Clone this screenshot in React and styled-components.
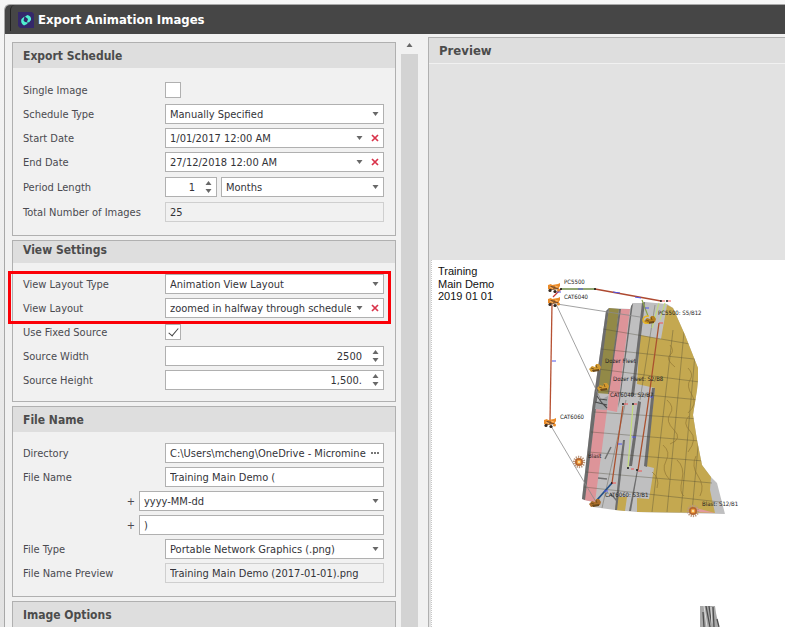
import React from 'react'
import styled, { createGlobalStyle } from 'styled-components'

const GlobalStyle = createGlobalStyle`
  * { box-sizing: border-box; }
  body {
    margin: 0;
    overflow: hidden;
    background: linear-gradient(#f6f6f6, #e2e2e2);
    color: #4a4a50;
    font-family: 'DejaVu Sans Condensed', Tahoma, sans-serif;
    font-size: 11px;
  }
  input, select, button { font: inherit; color: inherit; margin: 0; }
`

const Window = styled.div`
  display: flex;
  flex-direction: column;
  height: calc(100vh - 4px);
  margin: 4px 0 0 4px;
  overflow: hidden;
  background: #f1f1f1;
  border: solid #a8a8a8;
  border-width: 1px 0 0 1px;
  border-top-left-radius: 6px;
`

const TitleBar = styled.header`
  flex-shrink: 0;
  height: 29px;
  padding: 0 0 3px 5px;
  background: #464646;
  color: #fff;
`

const TitleInner = styled.div`
  display: flex;
  align-items: center;
  gap: 4px;
  height: 26px;
  padding: 4px 7px 0;
  border-left: 1px solid #222;
  border-top-left-radius: 5px;
`

const Title = styled.h1`
  margin: 0;
  font-size: 13px;
  font-weight: bold;
  line-height: 16px;
`

const Content = styled.main`
  display: flex;
  flex: 1;
  min-height: 0;
`

const Settings = styled.form`
  display: flex;
  flex: 0 0 391px;
  flex-direction: column;
  gap: 4px;
  padding: 8px 0 0 7px;
  overflow: hidden;
`

const Panel = styled.section`
  flex-shrink: 0;
  border: 1px solid #b0b0b0;
`

const PanelTitle = styled.h2`
  display: flex;
  flex-shrink: 0;
  align-items: center;
  height: ${p => (p.$short ? 22 : 25)}px;
  margin: 0;
  padding: ${p => (p.$short ? '0 10px 4px' : '0 10px')};
  background: #dedede;
  color: #4c4c4c;
  font-size: ${p => (p.$large ? 13 : 12)}px;
  line-height: 16px;
`

const PanelBody = styled.div`
  display: flex;
  flex-direction: column;
  gap: 4px;
  padding: ${p => p.$top || 11}px 11px ${p => p.$bottom || 11}px 10px;
`

const Row = styled.div`
  display: flex;
  align-items: center;
  gap: 4px;
  min-height: ${p => (p.$tall ? 22 : 20)}px;
`

const Label = styled.label`
  flex: 0 0 138px;
`

const Plus = styled.label`
  flex: 0 0 112px;
  text-align: right;
`

const Field = styled.div`
  display: flex;
  flex: ${p => (p.$small ? '0 0 52px' : '1')};
  align-items: center;
  min-width: 0;
  height: 20px;
  background: ${p => (p.$readOnly ? '#f1f1f1' : '#fff')};
  border: 1px solid ${p => (p.$readOnly ? '#cfcfcf' : '#b0b0b0')};
  color: #333338;
`

const TextInput = styled.input`
  flex: 1;
  width: 100%;
  min-width: 0;
  height: 18px;
  padding: ${p => (p.$right ? '0 5px 0 4px' : '0 0 0 4px')};
  background: transparent;
  border: 0;
  outline: 0;
  text-align: ${p => (p.$right ? 'right' : 'left')};
`

const Select = styled.select`
  flex: 1;
  min-width: 0;
  height: 18px;
  padding: 0 0 0 4px;
  appearance: none;
  background: transparent;
  border: 0;
  outline: 0;
`

const IconButton = styled.button`
  display: flex;
  flex: none;
  align-items: center;
  justify-content: center;
  width: 16px;
  height: ${p => (p.$half ? 8 : 18)}px;
  padding: 0;
  background: none;
  border: 0;
`

const Spinner = styled.div`
  display: flex;
  flex: none;
  flex-direction: column;
`

const Check = styled.input`
  display: grid;
  place-content: center;
  width: 16px;
  height: 16px;
  margin: 0;
  appearance: none;
  background: #fff;
  border: 1px solid #b0b0b0;
  &:checked::before {
    content: '';
    width: 4px;
    height: 9px;
    margin-bottom: 2px;
    border: solid #444;
    border-width: 0 1px 1px 0;
    transform: rotate(40deg);
  }
`

const Highlight = styled.div`
  display: flex;
  flex-direction: column;
  gap: 4px;
  position: relative;
  &::after {
    content: '';
    position: absolute;
    inset: -3px -7px -6px -15px;
    border: 3px solid #fb0007;
    pointer-events: none;
  }
`

const ScrollBar = styled.div`
  display: flex;
  flex: 0 0 17px;
  flex-direction: column;
  margin: 2px 10px 0 5px;
`

const Thumb = styled.div`
  flex: 1;
  background: #d3d3d3;
`

const PreviewPanel = styled.section`
  display: flex;
  flex: 1;
  flex-direction: column;
  min-width: 0;
  margin-top: 3px;
  border: solid #b0b0b0;
  border-width: 1px 0 0 1px;
`

const PreviewArea = styled.div`
  flex: 1;
  min-height: 0;
  padding: 196px 0 0 2px;
  background: #e2e2e2;
  border-top: 1px solid #f1f1f1;
`

const Sheet = styled.div`
  display: flex;
  height: 100%;
  overflow: hidden;
  background: #fff;
  border-left: 1px dotted #c8c8c8;
  svg { flex-shrink: 0; }
`

const Caret = ({ up }) => (
  <svg width="7" height="4" viewBox="0 0 7 4">
    <path d={up ? 'M0.5 4h6L3.5 0z' : 'M0.5 0h6L3.5 4z'} fill="#686868" />
  </svg>
)

const Cross = () => (
  <svg width="8" height="8" viewBox="0 0 8 8">
    <path d="M1 1l6 6M7 1L1 7" stroke="#d9334b" strokeWidth="1.7" />
  </svg>
)

const Logo = () => (
  <svg width="16" height="16" viewBox="0 0 16 16">
    <path d="M0 0h14l2 2v14H2l-2-2z" fill="#34286a" />
    <path d="M7 4.500L9.500 3C12 3.500 13.500 5.500 13 8l-2 2.500L9 10l1-3z" fill="#50f0d0" />
    <path d="M6.500 4.500L3.500 7C2.500 9.500 3.500 12 6 13.500l3-1.500 1-1.500-3-.5-1.500-1.500z" fill="#50f0d0" />
  </svg>
)

const SelectField = ({ id, value, label, clearable }) => (
  <Field>
    <Select id={id} defaultValue={value} aria-label={label}>
      <option>{value}</option>
    </Select>
    <IconButton as="span"><Caret /></IconButton>
    {clearable && <IconButton type="button" aria-label="Clear"><Cross /></IconButton>}
  </Field>
)

const DateField = ({ id, value }) => (
  <Field>
    <TextInput id={id} defaultValue={value} />
    <IconButton type="button" aria-label="Open calendar"><Caret /></IconButton>
    <IconButton type="button" aria-label="Clear"><Cross /></IconButton>
  </Field>
)

const NumberField = ({ id, value, small }) => (
  <Field $small={small}>
    <TextInput id={id} defaultValue={value} $right />
    <Spinner>
      <IconButton type="button" aria-label="Increase" $half><Caret up /></IconButton>
      <IconButton type="button" aria-label="Decrease" $half><Caret /></IconButton>
    </Spinner>
  </Field>
)

const TextField = ({ id, value, readOnly, children }) => (
  <Field $readOnly={readOnly}>
    <TextInput id={id} defaultValue={value} readOnly={readOnly} />
    {children}
  </Field>
)

const Truck = ({ x, y, color = '#e98a28' }) => (
  <g transform={`translate(${x} ${y})`}>
    <path d="M-6-3l3-1 1 1 6-1 2-1v3l-2 3-8 1-2-1z" fill={color} />
    <path d="M-3-2l5 1-1 1-5-1zM-5 1l9-1 1 1-9 1z" fill="#6b4930" />
    <circle cx="-4" cy="2.5" r="1.6" fill="#382b22" />
    <circle cx="1" cy="3.5" r="1.6" fill="#30251e" />
    <circle cx="4.5" cy="2" r="1.5" fill={color} />
    <path d="M-4-1l3 2M1-2l3 1" stroke="#ffb868" />
  </g>
)

const Excavator = ({ x, y, color = '#d29a30' }) => (
  <g transform={`translate(${x} ${y})`}>
    <path d="M-6 1l3-3 3 1 1-3 3 0 2 3-1 3-9 2z" fill={color} />
    <path d="M-3 2l7-1 0 2-6 1z" fill="#6b4a1c" />
    <path d="M1-3l1 3M-4 0l3 1" stroke="#6b4a1c" strokeWidth=".8" />
  </g>
)

const Blast = ({ x, y }) => (
  <g transform={`translate(${x} ${y})`}>
    <circle r="5" fill="none" stroke="#b9977f" strokeWidth="2.5" strokeDasharray="1.2 1" />
    <circle r="4" fill="#b5652f" />
    <circle r="2.3" fill="#f3a23f" />
    <circle r="1" fill="#fff0c0" />
  </g>
)

const labels = [
  [564, 284, 'PC5500'],
  [564, 299, 'CAT6040'],
  [560, 419, 'CAT6060'],
  [658, 315, 'PC5500: S5/B12'],
  [605, 363, 'Dozer Fleet'],
  [613, 381, 'Dozer Fleet: S2/B8'],
  [610, 397, 'CAT6040: S2/B7'],
  [588, 458, 'Blast'],
  [605, 497, 'CAT6060: S3/B1'],
  [702, 506, 'Blast: S12/B1'],
]

const pitOutline = 'M606 311L609 308 630 309 633 303 641 303 645 302 667 304 673 308 685 335 698 368 698 380 697 390 693 415 697 440 702 465 711 477 717 483 725 514 637 512 615 510 593 507 592 502 582 499 592 410z'

const MinePlan = () => (
  <svg width="353" height="367" viewBox="432 260 353 367">
    <clipPath id="pit"><path d={pitOutline} /></clipPath>
    <g fontFamily="Liberation Sans, Arial, sans-serif" fontSize="11" fill="#111">
      <text x="438" y="275">Training</text>
      <text x="438" y="288">Main Demo</text>
      <text x="438" y="300">2019 01 01</text>
    </g>

    {/* benches */}
    <path d={pitOutline} fill="#bfbfc0" />
    <path d="M609 308L619 309 609 394 596 393z" fill="#928947" />
    <path d="M620 309L630 309 617 412 607 410 609 392z" fill="#dd9499" />
    <path d="M596 409L607 410 595 502 584 500z" fill="#dd9499" />
    <path d="M667 305L673 308 685 335 698 368 698 380 697 390 693 415 697 440 702 465 711 477 710 490 715 513 637 512 637 498 649 499 654 468 646 466 655 388 637 384 640 335 661 339z" fill="#c4a850" />
    <path d="M617 497L627 497 625 511 615 510z" fill="#c4a850" />
    <path d="M696 508L715 513 696 512z" fill="#e29a9e" />

    {/* bench walls */}
    <g fill="#6c6c6c">
      <path d="M606 311L609 308 596 408 585 500 582 499 592 410z" />
      <path d="M642 303L645 302 634 396 631 396z" />
      <path d="M619 309L621 309 609 394 608 394z" />
      <path d="M631 306L633 303 620 400 618 408z" />
      <path d="M638 401L641 402 632 466 629 466z" />
      <path d="M652 388L655 388 647 467 644 466z" />
      <path d="M623 440L625 440 617 510 615 510 619 470z" />
      <path d="M637 470L638 470 631 511 629 511z" />
    </g>

    {/* block grid */}
    <g clipPath="url(#pit)" fill="none" stroke="#4a4632" strokeOpacity=".6" strokeWidth=".6">
      <path d="M603 329L690 344M601 349L694 359M598 369L700 382M595 390L700 400M594 412L700 419M591 432L700 441M588 452L704 461M586 472L712 483M584 487L720 502" />
      <path d="M673 330L652 512M684 332L667 512M695 354L681 512M700 425L692 512M626 400L602 508M655 305L640 400" />
    </g>
    <g clipPath="url(#pit)" fill="none" stroke="#8b7130" strokeWidth=".6">
      <path d="M670 345q5 6 0 10t5 12M688 368q6 6 2 12t2 15-4 18M667 400q8 7 3 14t4 16-4 14M689 416q-7 7 1 15t-2 21M663 445q8 7 3 16t3 18M677 460q8 7 5 20t2 16M696 456q-5 10 2 20t2 20M652 472q8 6 5 16" />
    </g>

    {/* rubble at the toe */}
    <path d="M596 402L608 396 607 410 595 409z" fill="#a0a3a5" />
    <path d="M597 396l5 7 5 5M595 402l12 3M600 399l7 1" stroke="#4a4a4a" strokeWidth="1.1" fill="none" />
    <path d="M605 459l6-12M598 478l9 1M611 494l6 7" stroke="#707070" strokeWidth="1.5" fill="none" />

    {/* haul roads */}
    <g fill="none" stroke="#8a8a8a" strokeWidth=".8">
      <path d="M556 304L600 398M551 426L596 502M557 304L608 312 640 317" />
    </g>
    <path d="M552 304L550 421" stroke="#b65032" strokeWidth="1.3" />
    <path d="M553 297L561 289" stroke="#c83b36" strokeWidth="1.3" />
    <path d="M561 289H595" stroke="#6b8a45" strokeWidth="1.5" />
    <path d="M595 289L661 301" stroke="#ad4930" strokeWidth="1.4" fill="none" />
    <path d="M659 323L647 411 638 470M623 406L612 483" stroke="#aa512f" strokeWidth="1.3" fill="none" />
    <path d="M633 405L628 467M659 303L652 328M665 303L660 320" stroke="#c2db7c" strokeWidth="1.2" fill="none" />
    <path d="M642 300L648 316" stroke="#88a344" strokeWidth="1.2" />
    <path d="M612 483L597 500" stroke="#244f87" strokeWidth="1.8" />
    <path d="M578 289h5M613 292l7 1M635 297l6 1M557 292h4M552 361h4M645 308h4M618 444h4M632 437h4M650 397h3M604 491h4" stroke="#4f54e9" strokeWidth="1" />
    <g fill="#151515">
      <circle cx="561" cy="289" r="1" /><circle cx="595" cy="289" r="1" />
      <circle cx="661" cy="301" r="1" /><circle cx="667" cy="301" r="1" />
      <circle cx="623" cy="404" r="1" /><circle cx="633" cy="404" r="1" />
      <circle cx="628" cy="468" r="1" /><circle cx="637" cy="470" r="1" />
      <circle cx="612" cy="483" r="1" />
    </g>
    <path d="M662 301h3M668 301h3M624 404h4M634 404h3M631 469h3M638 471h4M612 483h4M659 323h4" stroke="#f15252" />

    <Truck x="554" y="288" />
    <Truck x="554" y="302" />
    <Truck x="550" y="423" />
    <Excavator x="595" y="368" />
    <Excavator x="603" y="387" />
    <Excavator x="650" y="320" color="#b5801e" />
    <path d="M649 323q-6 1-6-3t6-4" fill="none" stroke="#e7b728" strokeWidth="1.5" />
    <Excavator x="595" y="503" color="#a96d2a" />
    <Blast x="579" y="462" />
    <Blast x="693" y="511" />

    <g fontFamily="DejaVu Sans Condensed, sans-serif" fontSize="6" fill="#222">
      {labels.map(([x, y, text]) => <text key={text} x={x} y={y}>{text}</text>)}
    </g>

    {/* rock face cut off by the lower edge */}
    <path d="M700 606h15l1 7 3 14h-19z" fill="#a8a8a8" />
    <path d="M706 606l4 21M709 606l3 21M713 607l1 20M717 619l2 8M703 612l1 15" stroke="#4f4f4f" strokeWidth="1.3" />
    <path d="M704 606l3 21M711 607l1 20" stroke="#ddd" />
  </svg>
)

export default function App() {
  return (
    <>
      <GlobalStyle />
      <Window>
        <TitleBar>
          <TitleInner>
            <Logo />
            <Title>Export Animation Images</Title>
          </TitleInner>
        </TitleBar>
        <Content>
          <Settings>
            <Panel>
              <PanelTitle>Export Schedule</PanelTitle>
              <PanelBody $top={12} $bottom={13}>
                <Row><Label htmlFor="single">Single Image</Label><Check id="single" type="checkbox" /></Row>
                <Row><Label htmlFor="schedule">Schedule Type</Label><SelectField id="schedule" value="Manually Specified" /></Row>
                <Row><Label htmlFor="start">Start Date</Label><DateField id="start" value="1/01/2017 12:00 AM" /></Row>
                <Row><Label htmlFor="end">End Date</Label><DateField id="end" value="27/12/2018 12:00 AM" /></Row>
                <Row $tall>
                  <Label htmlFor="period">Period Length</Label>
                  <NumberField id="period" value="1" small />
                  <SelectField label="Period unit" value="Months" />
                </Row>
                <Row><Label htmlFor="total">Total Number of Images</Label><TextField id="total" value="25" readOnly /></Row>
              </PanelBody>
            </Panel>

            <Panel>
              <PanelTitle $short>View Settings</PanelTitle>
              <PanelBody>
                <Highlight>
                  <Row><Label htmlFor="layoutType">View Layout Type</Label><SelectField id="layoutType" value="Animation View Layout" /></Row>
                  <Row><Label htmlFor="layout">View Layout</Label><SelectField id="layout" value="zoomed in halfway through schedule" clearable /></Row>
                </Highlight>
                <Row><Label htmlFor="fixed">Use Fixed Source</Label><Check id="fixed" type="checkbox" defaultChecked /></Row>
                <Row><Label htmlFor="width">Source Width</Label><NumberField id="width" value="2500" /></Row>
                <Row><Label htmlFor="height">Source Height</Label><NumberField id="height" value="1,500." /></Row>
              </PanelBody>
            </Panel>

            <Panel>
              <PanelTitle>File Name</PanelTitle>
              <PanelBody $bottom={13}>
                <Row>
                  <Label htmlFor="directory">Directory</Label>
                  <TextField id="directory" value="C:\Users\mcheng\OneDrive - Micromine">
                    <IconButton type="button" aria-label="Browse">
                      <svg width="8" height="2"><path d="M0 1h2M3 1h2M6 1h2" stroke="#777" strokeWidth="2" /></svg>
                    </IconButton>
                  </TextField>
                </Row>
                <Row><Label htmlFor="fileName">File Name</Label><TextField id="fileName" value="Training Main Demo (" /></Row>
                <Row><Plus htmlFor="dateFormat">+</Plus><SelectField id="dateFormat" value="yyyy-MM-dd" /></Row>
                <Row><Plus htmlFor="suffix">+</Plus><TextField id="suffix" value=")" /></Row>
                <Row><Label htmlFor="fileType">File Type</Label><SelectField id="fileType" value="Portable Network Graphics (.png)" /></Row>
                <Row><Label htmlFor="namePreview">File Name Preview</Label><TextField id="namePreview" value="Training Main Demo (2017-01-01).png" readOnly /></Row>
              </PanelBody>
            </Panel>

            <Panel>
              <PanelTitle>Image Options</PanelTitle>
              <PanelBody />
            </Panel>
          </Settings>
          <ScrollBar>
            <IconButton type="button" aria-label="Scroll up"><Caret up /></IconButton>
            <Thumb />
          </ScrollBar>
          <PreviewPanel>
            <PanelTitle $large>Preview</PanelTitle>
            <PreviewArea>
              <Sheet><MinePlan /></Sheet>
            </PreviewArea>
          </PreviewPanel>
        </Content>
      </Window>
    </>
  )
}
